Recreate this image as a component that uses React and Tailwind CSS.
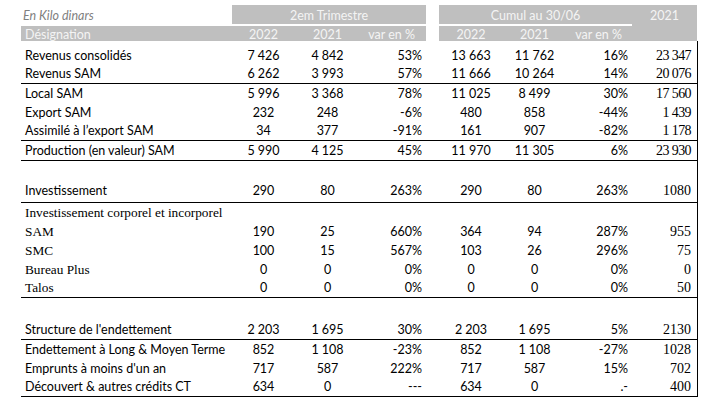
import React from "react";

const cols = "grid grid-cols-[211px_63px_65px_66px_13px_64px_63px_66px_65px]";

const rows = [
  { label: "Revenus consolidés", v: ["7 426", "4 842", "53%", "13 663", "11 762", "16%", "23 347"], h: "h-[24px]", tight: true },
  { label: "Revenus SAM", v: ["6 262", "3 993", "57%", "11 666", "10 264", "14%", "20 076"], h: "h-[19px]", line: true, tight: true },
  { label: "Local SAM", v: ["5 996", "3 368", "78%", "11 025", "8 499", "30%", "17 560"], h: "h-[19px]", tight: true },
  { label: "Export SAM", v: ["232", "248", "-6%", "480", "858", "-44%", "1 439"], h: "h-[19px]", tight: true },
  { label: "Assimilé à l’export SAM", v: ["34", "377", "-91%", "161", "907", "-82%", "1 178"], h: "h-[19px]", line: true, tight: true },
  { label: "Production (en valeur) SAM", v: ["5 990", "4 125", "45%", "11 970", "11 305", "6%", "23 930"], h: "h-[20px]", line: true, tight: true },
  { empty: true, h: "h-[20px]" },
  { label: "Investissement", v: ["290", "80", "263%", "290", "80", "263%", "1080"], h: "h-[22px] pb-[2px]", line: true },
  { label: "Investissement corporel et incorporel", serif: true, v: ["", "", "", "", "", "", ""], h: "h-[19px]" },
  { label: "SAM", serif: true, v: ["190", "25", "660%", "364", "94", "287%", "955"], h: "h-[19px]" },
  { label: "SMC", serif: true, v: ["100", "15", "567%", "103", "26", "296%", "75"], h: "h-[19px]" },
  { label: "Bureau Plus", serif: true, v: ["0", "0", "0%", "0", "0", "0%", "0"], h: "h-[19px]" },
  { label: "Talos", serif: true, v: ["0", "0", "0%", "0", "0", "0%", "50"], h: "h-[19px]", line: true },
  { empty: true, h: "h-[21px]" },
  { label: "Structure de l'endettement", v: ["2 203", "1 695", "30%", "2 203", "1 695", "5%", "2130"], h: "h-[21px]", line: true },
  { label: "Endettement à Long & Moyen Terme", v: ["852", "1 108", "-23%", "852", "1 108", "-27%", "1028"], h: "h-[19px]" },
  { label: "Emprunts à moins d'un an", v: ["717", "587", "222%", "717", "587", "15%", "702"], h: "h-[19px]" },
  { label: "Découvert & autres crédits CT", v: ["634", "0", "---", "634", "0", ".-", "400"], h: "h-[19px]", line: true },
];

const sans = "font-['Lato','Liberation_Sans',sans-serif] text-[12.5px]";
const serif = "font-['Liberation_Serif','Times_New_Roman',serif] text-[13.3px]";
const serifNum = "font-['Liberation_Serif','Times_New_Roman',serif] text-[14px]";

function Row({ r }) {
  if (r.empty) return <div className={r.h} />;
  const [b, c, d, e, f, g, h] = r.v;
  return (
    <div className={`${cols} items-end leading-[18px] text-black ${r.h} ${r.line ? "border-b border-black" : ""}`}>
      <div className={`whitespace-nowrap pl-[4px] ${r.serif ? serif : sans}`}>{r.label}</div>
      <div className={`text-center ${sans}`}>{b}</div>
      <div className={`text-center ${sans}`}>{c}</div>
      <div className={`text-right pr-[4px] ${sans}`}>{d}</div>
      <div />
      <div className={`text-center ${sans}`}>{e}</div>
      <div className={`text-center ${sans}`}>{f}</div>
      <div className={`text-right pr-[4px] ${sans}`}>{g}</div>
      <div className={`text-right ${serifNum} ${r.tight ? "pr-[6px] tracking-[-0.6px]" : "pr-[6px]"}`}>{h}</div>
    </div>
  );
}

export default function App() {
  return (
    <div className="h-[413px] w-[713px] bg-white pt-[5px]">
      <div className={`${cols} ml-[21px] grid-rows-[19px_15px] gap-y-[2px] text-[#f4f4f4] ${sans}`}>
        <div className="col-start-1 row-start-1 pl-[2px] pt-[2px] italic leading-[18px] text-[#7f7f7f]">En Kilo dinars</div>
        <div className="col-span-3 col-start-2 row-start-1 bg-[#bfbfbf] pt-[2px] text-center leading-[18px]">2em Trimestre</div>
        <div className="col-span-3 col-start-6 row-start-1 bg-[#bfbfbf] pt-[2px] text-center leading-[18px]">Cumul au 30/06</div>
        <div className="col-start-9 row-span-2 row-start-1 bg-[#bfbfbf] pt-[2px] text-center leading-[18px]">2021</div>
        <div className="col-start-1 row-start-2 bg-[#bfbfbf] pl-[4px] pt-[1px] leading-[15px]">Désignation</div>
        <div className="col-start-2 row-start-2 bg-[#bfbfbf] pt-[1px] text-center leading-[15px]">2022</div>
        <div className="col-start-3 row-start-2 bg-[#bfbfbf] pt-[1px] text-center leading-[15px]">2021</div>
        <div className="col-start-4 row-start-2 bg-[#bfbfbf] pr-[11px] pt-[1px] text-right leading-[15px]">var en %</div>
        <div className="col-start-6 row-start-2 bg-[#bfbfbf] pt-[1px] text-center leading-[15px]">2022</div>
        <div className="col-start-7 row-start-2 bg-[#bfbfbf] pt-[1px] text-center leading-[15px]">2021</div>
        <div className="col-start-8 row-start-2 bg-[#bfbfbf] pr-[10px] pt-[1px] text-right leading-[15px]">var en %</div>
      </div>
      <div className="ml-[21px] w-[677px] border-r border-black">
        {rows.map((r, i) => (
          <Row key={i} r={r} />
        ))}
      </div>
    </div>
  );
}
